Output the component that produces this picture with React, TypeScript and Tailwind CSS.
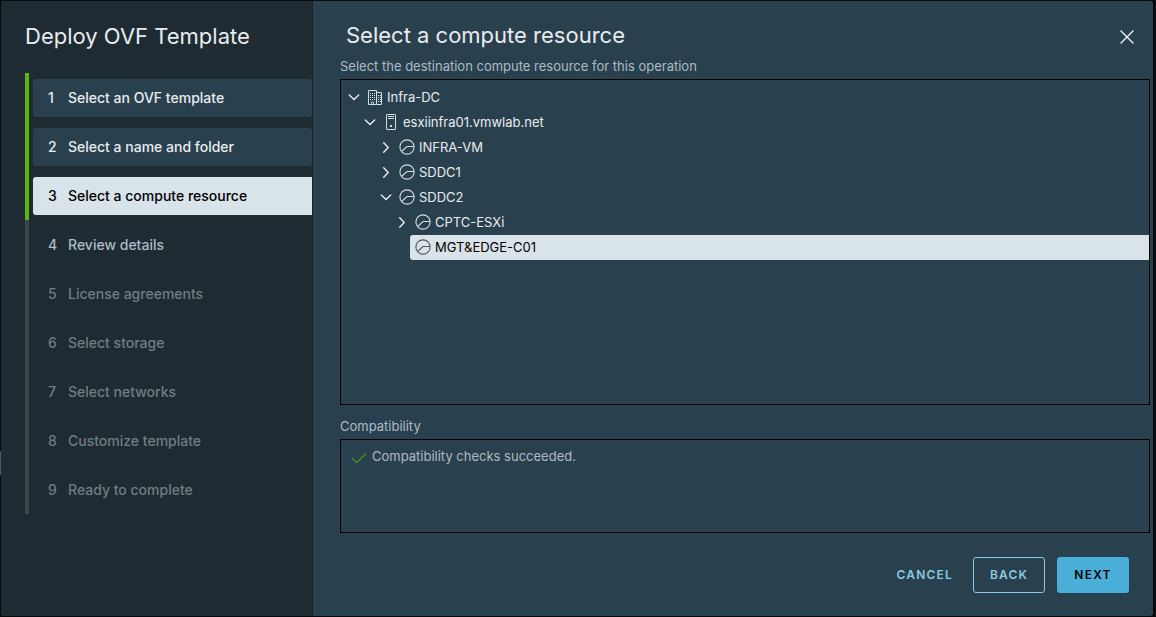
import { useState } from "react";
import type { ReactNode } from "react";

const steps = [
  "Select an OVF template",
  "Select a name and folder",
  "Select a compute resource",
  "Review details",
  "License agreements",
  "Select storage",
  "Select networks",
  "Customize template",
  "Ready to complete",
];

function stepStyle(index: number, current: number) {
  if (index === current) return "rounded-l-[3px] bg-[#d9e4ea] text-black";
  if (index < current) return "rounded-[3px] bg-[#29404e] text-[#e9ecef]";
  if (index === current + 1) return "text-[#adbbc4]";
  return "text-[#727d83]";
}

function Steps({ current }: { current: number }) {
  return (
    <ol>
      {steps.map((label, i) => (
        <li
          key={label}
          className={`border-l-4 pt-[6px] pb-[5px] pl-1 ${i <= current ? "border-[#60b515]" : "border-[#3a474d]"}`}
        >
          <button
            type="button"
            disabled={i > current + 1}
            aria-current={i === current ? "step" : undefined}
            className={`flex h-[38px] w-full items-center pl-[15px] text-left text-[14px] leading-5 font-medium ${stepStyle(i, current)}`}
          >
            <span className="w-5">{i + 1}</span>
            <span>{label}</span>
          </button>
        </li>
      ))}
    </ol>
  );
}

function DatacenterIcon() {
  return (
    <svg viewBox="0 0 16 16" className="size-4 shrink-0" fill="none" stroke="currentColor" aria-hidden="true">
      <path d="M1.500 15.500v-14h8v14ZM9.500 3.500h5v12h-5" />
      <path d="M3 4.500h5M3 6.500h5M3 8.500h5M3 10.500h5M11 6.500h3M11 8.500h3M11 10.500h3M11 12.500h3" strokeDasharray="1 1" />
      <path d="M4.500 15v-2h2v2" strokeWidth="0.8" />
    </svg>
  );
}

function HostIcon() {
  return (
    <svg viewBox="0 0 16 16" className="size-4 shrink-0" fill="none" stroke="currentColor" aria-hidden="true">
      <rect x="3.500" y="0.500" width="9" height="15" rx="0.500" />
      <path d="M5 2.500h6M5 4.500h6" />
      <rect x="7" y="11" width="2" height="2" fill="currentColor" stroke="none" />
    </svg>
  );
}

function PoolIcon() {
  return (
    <svg viewBox="0 0 16 16" className="size-4 shrink-0" fill="none" stroke="currentColor" strokeWidth="1.100" aria-hidden="true">
      <circle cx="8" cy="8" r="7.100" />
      <path d="M2.500 12.500 8 7.500h7" />
    </svg>
  );
}

function Chevron({ open }: { open: boolean }) {
  return (
    <svg viewBox="0 0 16 16" className="size-4" fill="none" stroke="currentColor" strokeWidth="1.400" strokeLinecap="round" strokeLinejoin="round" aria-hidden="true">
      <path d={open ? "M3.300 6 8 10.500 12.700 6" : "M5.700 3.800 10.200 8.500 5.700 13.200"} />
    </svg>
  );
}

type TreeItemProps = {
  label: string;
  icon: ReactNode;
  leaf?: boolean;
  defaultOpen?: boolean;
  selected?: boolean;
  children?: ReactNode;
};

function TreeItem({ label, icon, leaf, defaultOpen = false, selected = false, children }: TreeItemProps) {
  const [open, setOpen] = useState(defaultOpen);
  return (
    <li role="treeitem" aria-expanded={leaf ? undefined : open} aria-selected={selected}>
      <div className="flex h-[25px]">
        {leaf ? (
          <span className="w-4" />
        ) : (
          <button type="button" className="flex items-center pb-px" aria-label={`Toggle ${label}`} onClick={() => setOpen(!open)}>
            <Chevron open={open} />
          </button>
        )}
        <button
          type="button"
          className={`flex flex-1 items-center gap-1 pb-px pl-[5px] text-left text-[13px] leading-5 ${
            selected ? "rounded-l-[3px] bg-[#d9e4ea] text-black" : "text-[#e9ecef]"
          }`}
        >
          <span className={selected ? "text-[#565656]" : "text-[#d5dce0]"}>{icon}</span>
          {label}
        </button>
      </div>
      {open && children ? (
        <ul role="group" className="pl-4">
          {children}
        </ul>
      ) : null}
    </li>
  );
}

export default function App() {
  return (
    <div className="relative flex min-h-screen bg-[#070b0e] pt-px pr-[3px] pb-px pl-px font-['Inter',sans-serif]">
      <span className="absolute top-[451px] left-0 h-6 w-px bg-[#555a5c]" />
      <div role="dialog" aria-labelledby="wizard-title" className="flex flex-1 overflow-hidden rounded-[3px] bg-[#29404e]">
        <aside className="w-[312px] shrink-0 border-r border-[#17242b] bg-[#1e2b33] pl-6">
          <h1 id="wizard-title" className="mb-[21px] pt-[19px] text-[22px] leading-8 text-[#e9ecef]">
            Deploy OVF Template
          </h1>
          <Steps current={2} />
        </aside>

        <main className="flex min-w-0 flex-1 flex-col pr-[3px] pl-[27px] text-[13px] leading-5 text-[#adbbc4]">
          <header className="flex items-center justify-between pt-[18px] pr-[13px] pl-[6px]">
            <h2 className="text-[22px] leading-8 text-[#e9ecef]">Select a compute resource</h2>
            <button type="button" aria-label="Close" className="text-[#f0f3f5]">
              <svg viewBox="0 0 20 20" className="size-5" fill="none" stroke="currentColor" strokeWidth="1.400" strokeLinecap="round" aria-hidden="true">
                <path d="M4 6 16 18M16 6 4 18" />
              </svg>
            </button>
          </header>

          <p className="pt-[5px] pb-[3px]">Select the destination compute resource for this operation</p>
          <ul role="tree" aria-label="Compute resources" className="min-h-[200px] flex-1 border border-black pt-[5px] pl-[5px] text-[#e9ecef]">
            <TreeItem label="Infra-DC" icon={<DatacenterIcon />} defaultOpen>
              <TreeItem label="esxiinfra01.vmwlab.net" icon={<HostIcon />} defaultOpen>
                <TreeItem label="INFRA-VM" icon={<PoolIcon />} />
                <TreeItem label="SDDC1" icon={<PoolIcon />} />
                <TreeItem label="SDDC2" icon={<PoolIcon />} defaultOpen>
                  <TreeItem label="CPTC-ESXi" icon={<PoolIcon />} />
                  <TreeItem label="MGT&EDGE-C01" icon={<PoolIcon />} leaf selected />
                </TreeItem>
              </TreeItem>
            </TreeItem>
          </ul>

          <h3 className="pt-[11px] pb-[3px]">Compatibility</h3>
          <div className="flex h-[94px] items-start gap-1 border border-black pt-[6px] pl-[10px]">
            <svg viewBox="0 0 16 16" className="mt-1 size-4 text-[#4d9221]" fill="none" stroke="currentColor" strokeWidth="1.200" strokeLinecap="round" strokeLinejoin="round" aria-hidden="true">
              <path d="M1.500 8.500 5.700 12.500 14.500 4" />
            </svg>
            <p className="pl-px">Compatibility checks succeeded.</p>
          </div>

          <footer className="flex items-center justify-end gap-3 pt-6 pr-[21px] pb-[23px] text-[12px] font-semibold tracking-widest">
            <button type="button" className="h-9 px-2 text-[#89cbdf]">
              CANCEL
            </button>
            <button type="button" className="h-9 w-[72px] rounded-[3px] border border-[#89cbdf] text-[#89cbdf]">
              BACK
            </button>
            <button type="button" className="h-9 w-[72px] rounded-[3px] bg-[#49afd9] text-black">
              NEXT
            </button>
          </footer>
        </main>
      </div>
    </div>
  );
}
